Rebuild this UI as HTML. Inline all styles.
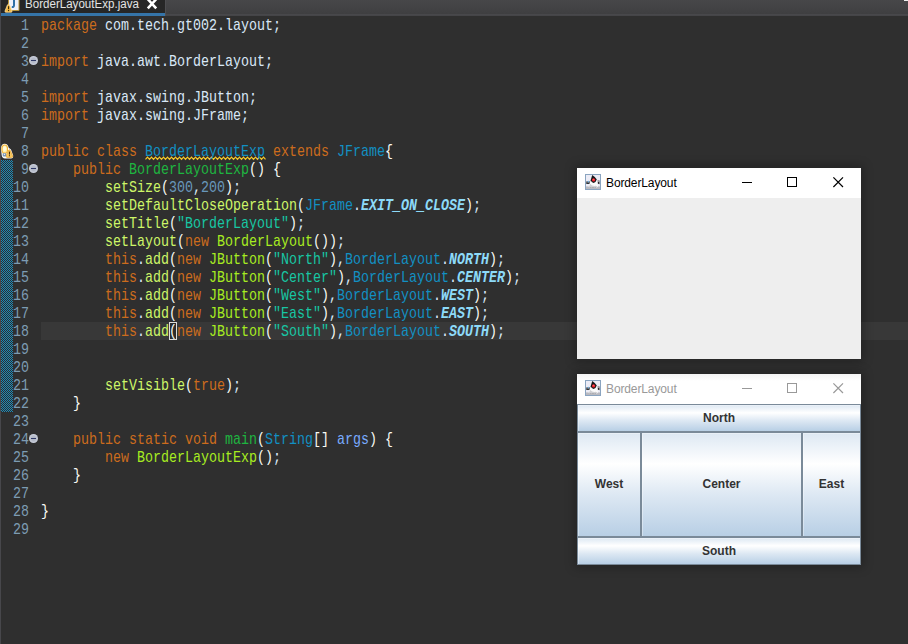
<!DOCTYPE html>
<html>
<head>
<meta charset="utf-8">
<style>
*{margin:0;padding:0;box-sizing:border-box}
html,body{width:908px;height:644px;overflow:hidden;background:#2f2f2f}
body{position:relative;font-family:"Liberation Sans",sans-serif}
#tabbar{position:absolute;left:0;top:0;width:908px;height:16px;background:#2c2c2c;overflow:hidden}
#tabbar:before{content:"";position:absolute;left:165px;top:0;width:743px;height:16px;background:linear-gradient(#474749 0,#3f3f41 14px,#48484b 14.5px,#454548 15.5px,#2f2f2f 16px);border-left:1px solid #4e4e51}
#tabbar:after{content:"";position:absolute;left:904px;top:0;width:4px;height:1px;background:#f0f0f0}
#tab{position:absolute;left:1px;top:0;width:164px;height:16px;background:#262626;border-bottom:3px solid #3574a8}
#tabtxt{position:absolute;left:24.6px;top:-3.7px;font-size:12.5px;line-height:16px;color:#e4e4e4;white-space:nowrap;transform:scaleX(.926);transform-origin:0 0}
#leftedge{position:absolute;left:0;top:0;width:1px;height:644px;background:#47474b}
#curline{position:absolute;left:41px;top:322px;width:867px;height:18px;background:#383838}
#diff{position:absolute;left:1px;top:160px;width:12px;height:252px;background-color:#1a8cba;
 background-image:conic-gradient(#302c2b 25%,transparent 0 50%,#302c2b 0 75%,transparent 0);background-size:2px 2px}
#nums{position:absolute;left:0;top:16.6px;width:29px;text-align:right;font-family:"Liberation Mono",monospace;font-size:13.333px;line-height:15px;color:#7d9cb3;white-space:pre;transform:scaleY(1.2);transform-origin:0 0}
#code{position:absolute;left:41px;top:16.6px;font-family:"Liberation Mono",monospace;font-size:13.333px;line-height:15px;color:#d9e8f7;white-space:pre;transform:scaleY(1.2);transform-origin:0 0}
#brk{position:absolute;left:169px;top:322px;width:8px;height:18px;border:1px solid #dcdcdc;background:#2b2b2b}
.k{color:#cc6c1d}.c{color:#1290c3}.m{color:#cdf668}.n{color:#a7ec21}.d{color:#1eb540}.s{color:#17c6a3}.u{color:#6897bb}
.f{color:#8ddaf8;font-weight:bold;font-style:italic}.p{color:#79abff}.b{color:#f9faf4}.o{color:#e6e6fa}
.fold{position:absolute;left:29px;width:9px;height:9px;border-radius:50%;background:radial-gradient(#b2b8c6 30%,#cfd4e0 75%)}
.fold:after{content:"";position:absolute;left:2px;top:4px;width:5px;height:1px;background:#2e3866}
.win{position:absolute;background:#fff;box-shadow:0 0 10px 2px rgba(0,0,0,.28)}
.ttl{position:absolute;left:29px;top:7px;font-size:12px;line-height:16px;color:#000;white-space:nowrap;letter-spacing:-.12px}
.ico{position:absolute;left:8px;top:6px;width:16px;height:16px}
.ctl{position:absolute;top:0;left:0}
.btn{position:absolute;border:1px solid #7a8a99;background:linear-gradient(#dde8f3 0%,#ffffff 30%,#dde8f3 60%,#b8cfe5 100%);
 box-shadow:inset 1px 1px 0 rgba(255,255,255,.35);
 font-weight:bold;font-size:12px;color:#333;display:flex;align-items:center;justify-content:center}
</style>
</head>
<body>
<div id="tabbar"><div id="tab"></div><div id="tabtxt">BorderLayoutExp.java</div>
<svg style="position:absolute;left:4px;top:-4px" width="17" height="17" viewBox="0 0 17 17">
 <path d="M4.5 0.5 H11.5 L15 4 V14.5 H4.5 Z" fill="#eef1fb" stroke="#b4923a" stroke-width="1"/>
 <path d="M10 3.5 V9.2 Q10 11.3 7.8 11.1" fill="none" stroke="#2f6fa6" stroke-width="2"/>
 <path d="M3.4 9 Q4.5 7 5.6 9 L8 15 Q8.3 16.2 7.2 16.2 H1.8 Q0.7 16.2 1 15 Z" fill="#f1b744" stroke="#fbe6b4" stroke-width=".7"/>
 <rect x="4" y="10.2" width="1.1" height="3" fill="#3a2a08"/><rect x="4" y="14" width="1.1" height="1.1" fill="#3a2a08"/>
</svg>
<svg style="position:absolute;left:146px;top:-2px" width="12" height="12" viewBox="0 0 12 12"><path d="M1.8 1.2 L10.2 10.4 M10.2 1.2 L1.8 10.4" stroke="#fff" stroke-width="2.6"/></svg>
</div>
<div id="curline"></div>
<div id="diff"></div>
<div id="brk"></div>
<svg style="position:absolute;left:0;top:0" width="300" height="170"><polyline points="145.5,159.4 147.5,157.2 149.5,159.4 151.5,157.2 153.5,159.4 155.5,157.2 157.5,159.4 159.5,157.2 161.5,159.4 163.5,157.2 165.5,159.4 167.5,157.2 169.5,159.4 171.5,157.2 173.5,159.4 175.5,157.2 177.5,159.4 179.5,157.2 181.5,159.4 183.5,157.2 185.5,159.4 187.5,157.2 189.5,159.4 191.5,157.2 193.5,159.4 195.5,157.2 197.5,159.4 199.5,157.2 201.5,159.4 203.5,157.2 205.5,159.4 207.5,157.2 209.5,159.4 211.5,157.2 213.5,159.4 215.5,157.2 217.5,159.4 219.5,157.2 221.5,159.4 223.5,157.2 225.5,159.4 227.5,157.2 229.5,159.4 231.5,157.2 233.5,159.4 235.5,157.2 237.5,159.4 239.5,157.2 241.5,159.4 243.5,157.2 245.5,159.4 247.5,157.2 249.5,159.4 251.5,157.2 253.5,159.4 255.5,157.2 257.5,159.4 259.5,157.2 261.5,159.4 263.5,157.2 265.5,159.4" fill="none" stroke="#f7c92a" stroke-width="1.15"/></svg>
<div id="leftedge"></div>
<svg style="position:absolute;left:0;top:143px" width="15" height="17" viewBox="0 0 15 17">
 <path d="M1 6 Q1 .8 4.7 .8 Q8 .8 8.6 4.6 L9.6 5.4 Q10.6 5.6 11.2 7 L13.2 12.6 Q13.4 15.6 11 15.6 H5 Q2 15.4 1.6 12 Z" fill="#fdfdfb"/>
 <path d="M1.9 6.2 Q1.9 2 4.7 2 Q7.6 2 7.6 6.2 Q7.6 8.4 6.4 10 H3 Q1.9 8.4 1.9 6.2 Z" fill="#fdf0b0" stroke="#f3b02e" stroke-width="1.1"/>
 <ellipse cx="4.6" cy="5.6" rx="1.6" ry="2.4" fill="#fffbe0"/>
 <rect x="2.7" y="10.2" width="3.6" height="3.2" rx=".8" fill="#6f8fb5"/><rect x="3.8" y="10.8" width="1.3" height="1.3" fill="#e8eef6"/>
 <path d="M8.4 7.6 Q9.4 6 10.4 7.6 L12.6 13 Q12.9 14.4 11.6 14.4 H7.2 Q5.9 14.4 6.2 13 Z" fill="#f6c964" stroke="#e8a32e" stroke-width=".8"/>
 <rect x="8.9" y="8.6" width="1.1" height="3" fill="#4a2c06"/><rect x="8.9" y="12.2" width="1.1" height="1.1" fill="#4a2c06"/>
</svg>
<div id="nums">1
2
3
4
5
6
7
8
9
10
11
12
13
14
15
16
17
18
19
20
21
22
23
24
25
26
27
28
29</div>
<div class="fold" style="top:56px"></div>
<div class="fold" style="top:164px"></div>
<div class="fold" style="top:434px"></div>
<div id="code"><span class="k">package</span> com.tech.gt002.layout;

<span class="k">import</span> java.awt.BorderLayout;

<span class="k">import</span> javax.swing.JButton;
<span class="k">import</span> javax.swing.JFrame;

<span class="k">public</span> <span class="k">class</span> <span class="c" id="warn">BorderLayoutExp</span> <span class="k">extends</span> <span class="c">JFrame</span><span class="b">{</span>
    <span class="k">public</span> <span class="d">BorderLayoutExp</span><span class="b">()</span> <span class="b">{</span>
        <span class="m">setSize</span><span class="b">(</span><span class="u">300</span>,<span class="u">200</span><span class="b">)</span>;
        <span class="m">setDefaultCloseOperation</span><span class="b">(</span><span class="c">JFrame</span>.<span class="f">EXIT_ON_CLOSE</span><span class="b">)</span>;
        <span class="m">setTitle</span><span class="b">(</span><span class="s">"BorderLayout"</span><span class="b">)</span>;
        <span class="m">setLayout</span><span class="b">(</span><span class="k">new</span> <span class="n">BorderLayout</span><span class="b">())</span>;
        <span class="k">this</span>.<span class="m">add</span><span class="b">(</span><span class="k">new</span> <span class="n">JButton</span><span class="b">(</span><span class="s">"North"</span><span class="b">)</span>,<span class="c">BorderLayout</span>.<span class="f">NORTH</span><span class="b">)</span>;
        <span class="k">this</span>.<span class="m">add</span><span class="b">(</span><span class="k">new</span> <span class="n">JButton</span><span class="b">(</span><span class="s">"Center"</span><span class="b">)</span>,<span class="c">BorderLayout</span>.<span class="f">CENTER</span><span class="b">)</span>;
        <span class="k">this</span>.<span class="m">add</span><span class="b">(</span><span class="k">new</span> <span class="n">JButton</span><span class="b">(</span><span class="s">"West"</span><span class="b">)</span>,<span class="c">BorderLayout</span>.<span class="f">WEST</span><span class="b">)</span>;
        <span class="k">this</span>.<span class="m">add</span><span class="b">(</span><span class="k">new</span> <span class="n">JButton</span><span class="b">(</span><span class="s">"East"</span><span class="b">)</span>,<span class="c">BorderLayout</span>.<span class="f">EAST</span><span class="b">)</span>;
        <span class="k">this</span>.<span class="m">add</span><span class="b">(</span><span class="k">new</span> <span class="n">JButton</span><span class="b">(</span><span class="s">"South"</span><span class="b">)</span>,<span class="c">BorderLayout</span>.<span class="f">SOUTH</span><span class="b">)</span>;


        <span class="m">setVisible</span><span class="b">(</span><span class="k">true</span><span class="b">)</span>;
    <span class="b">}</span>

    <span class="k">public</span> <span class="k">static</span> <span class="k">void</span> <span class="d">main</span><span class="b">(</span><span class="c">String</span><span class="b">[]</span> <span class="p">args</span><span class="b">)</span> <span class="b">{</span>
        <span class="k">new</span> <span class="n">BorderLayoutExp</span><span class="b">()</span>;
    <span class="b">}</span>

<span class="b">}</span>
</div>

<!-- window 1 -->
<div class="win" style="left:577px;top:168px;width:284px;height:191px">
  <svg class="ico" viewBox="0 0 16 16">
 <rect x=".5" y=".5" width="15" height="15" fill="#ececf6" stroke="#8aa4c0"/>
 <rect x="1" y="12.4" width="14" height="2.6" fill="#b9b9c0"/>
 <path d="M1 7.6 Q3.2 6.6 5.6 7.6 L5.2 10 Q3 9.2 1 10 Z" fill="#6a6c70"/>
 <path d="M1.8 9 Q3.2 8.6 4.4 9.2 L4.2 10 Q3 9.6 1.8 10 Z" fill="#1e1e20"/>
 <circle cx="3.4" cy="7.6" r=".8" fill="#6cb0e4"/>
 <path d="M12.4 6.2 Q13.8 5.6 14.9 6.6 L14.8 8.6 H12.6 Z" fill="#9a9aa0"/>
 <path d="M12.7 8.2 Q13.8 7.8 14.6 8.6 L14.4 10.2 Q13.6 9.6 12.9 10 Z" fill="#1c1c1e"/>
 <path d="M7.2 1.4 L12 6.2 L13 13 Q8.6 14.2 3.6 13 L5.4 7.4 Z" fill="#fbfbfb"/>
 <path d="M5.2 10 Q7.4 12.4 10.8 11.8 L12.9 12.6 Q8.4 14.4 3.8 12.9 Z" fill="#cfcfd3"/>
 <path d="M4.8 13 Q8 14 11 13 L11 13.6 Q8 14.4 4.8 13.6 Z" fill="#77777c"/>
 <path d="M7.3 .9 Q10.4 3 11.8 5.4 Q10.8 8.4 8.6 9 Q6.4 8.4 5.7 6.2 Q6.4 3.2 7.3 .9 Z" fill="#14181b"/>
 <circle cx="8.6" cy="5.9" r="1.65" fill="#ee1f2a"/><circle cx="8.5" cy="5.5" r=".8" fill="#ff5c5c"/>
</svg><svg class="ctl" width="284" height="30" viewBox="0 0 284 30" shape-rendering="crispEdges">
 <rect x="165" y="14" width="10" height="1" fill="#000"/>
 <rect x="210.5" y="9.5" width="9" height="9" fill="none" stroke="#000" stroke-width="1"/>
 <path d="M256.4 9.4 L266 19 M266 9.4 L256.4 19" stroke="#000" stroke-width="1.2" shape-rendering="auto"/>
</svg>
  <div class="ttl">BorderLayout</div>
  <div style="position:absolute;left:0;top:30px;width:284px;height:161px;background:#eeeeee"></div>
</div>
<!-- window 2 -->
<div class="win" style="left:577px;top:374px;width:284px;height:191px;background:linear-gradient(#f3f3f3,#fff 7px)">
  <svg class="ico" viewBox="0 0 16 16">
 <rect x=".5" y=".5" width="15" height="15" fill="#ececf6" stroke="#8aa4c0"/>
 <rect x="1" y="12.4" width="14" height="2.6" fill="#b9b9c0"/>
 <path d="M1 7.6 Q3.2 6.6 5.6 7.6 L5.2 10 Q3 9.2 1 10 Z" fill="#6a6c70"/>
 <path d="M1.8 9 Q3.2 8.6 4.4 9.2 L4.2 10 Q3 9.6 1.8 10 Z" fill="#1e1e20"/>
 <circle cx="3.4" cy="7.6" r=".8" fill="#6cb0e4"/>
 <path d="M12.4 6.2 Q13.8 5.6 14.9 6.6 L14.8 8.6 H12.6 Z" fill="#9a9aa0"/>
 <path d="M12.7 8.2 Q13.8 7.8 14.6 8.6 L14.4 10.2 Q13.6 9.6 12.9 10 Z" fill="#1c1c1e"/>
 <path d="M7.2 1.4 L12 6.2 L13 13 Q8.6 14.2 3.6 13 L5.4 7.4 Z" fill="#fbfbfb"/>
 <path d="M5.2 10 Q7.4 12.4 10.8 11.8 L12.9 12.6 Q8.4 14.4 3.8 12.9 Z" fill="#cfcfd3"/>
 <path d="M4.8 13 Q8 14 11 13 L11 13.6 Q8 14.4 4.8 13.6 Z" fill="#77777c"/>
 <path d="M7.3 .9 Q10.4 3 11.8 5.4 Q10.8 8.4 8.6 9 Q6.4 8.4 5.7 6.2 Q6.4 3.2 7.3 .9 Z" fill="#14181b"/>
 <circle cx="8.6" cy="5.9" r="1.65" fill="#ee1f2a"/><circle cx="8.5" cy="5.5" r=".8" fill="#ff5c5c"/>
</svg><svg class="ctl" width="284" height="30" viewBox="0 0 284 30" shape-rendering="crispEdges">
 <rect x="165" y="14" width="10" height="1" fill="#999"/>
 <rect x="210.5" y="9.5" width="9" height="9" fill="none" stroke="#999" stroke-width="1"/>
 <path d="M256.4 9.4 L266 19 M266 9.4 L256.4 19" stroke="#999" stroke-width="1.2" shape-rendering="auto"/>
</svg>
  <div class="ttl" style="color:#999">BorderLayout</div>
  <div class="btn" style="left:0;top:30px;width:284px;height:28px">North</div>
  <div class="btn" style="left:0;top:58px;width:64px;height:105px;padding-bottom:2px">West</div>
  <div class="btn" style="left:64px;top:58px;width:161px;height:105px;padding-bottom:2px">Center</div>
  <div class="btn" style="left:225px;top:58px;width:59px;height:105px;padding-bottom:2px">East</div>
  <div class="btn" style="left:0;top:163px;width:284px;height:28px">South</div>
</div>
</body>
</html>
